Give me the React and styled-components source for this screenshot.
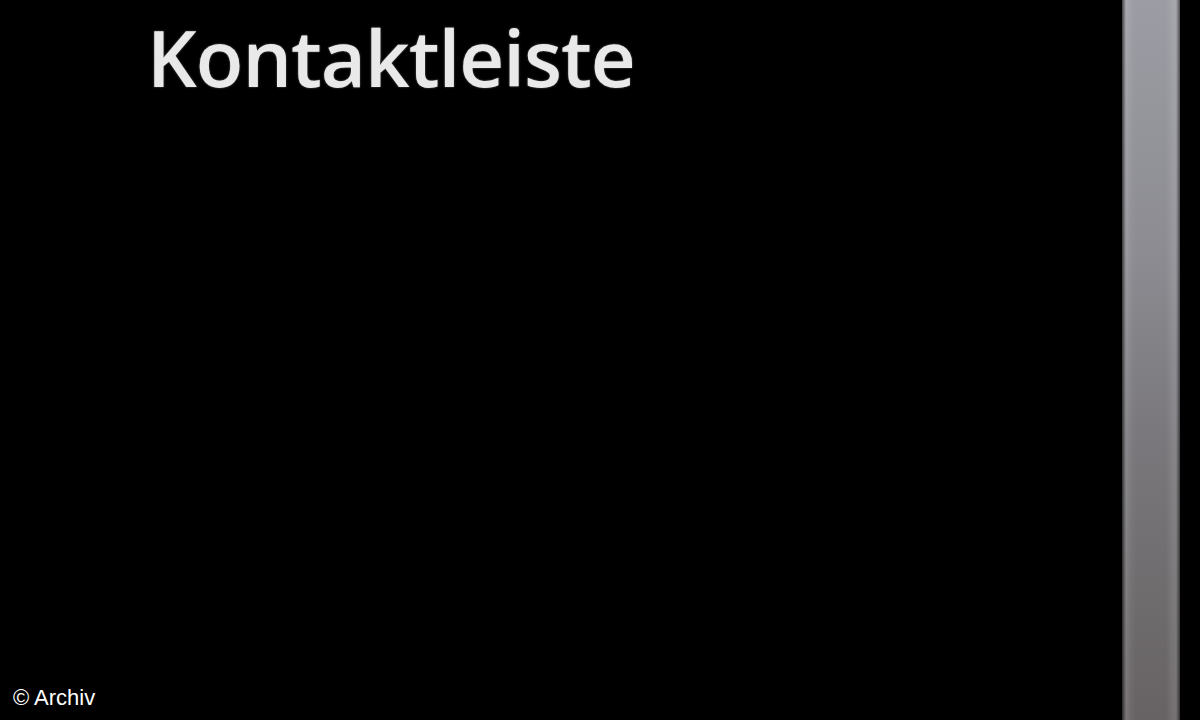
import React from 'react';
import styled, { createGlobalStyle } from 'styled-components';

const GlobalStyle = createGlobalStyle`
  html, body {
    margin: 0;
    padding: 0;
    background: #000;
  }
  #root {
    height: 720px;
  }
`;

const Screen = styled.div`
  display: flex;
  flex-direction: row;
  width: 1200px;
  height: 720px;
  background: #000;
  overflow: hidden;
`;

const Main = styled.div`
  flex: 1;
  display: flex;
  flex-direction: column;
  justify-content: space-between;
`;

const Title = styled.h1`
  margin: 0;
  padding: 7px 0 0 147px;
  font-family: "Open Sans", "Noto Sans", sans-serif;
  font-weight: 600;
  font-size: 78px;
  line-height: 100px;
  color: #e9e9e9;
  text-shadow: 0 0 2px rgba(255, 255, 255, 0.45);
  letter-spacing: -1px;
`;

const Credit = styled.div`
  padding: 0 0 9px 13px;
  font-family: "Liberation Sans", Arial, sans-serif;
  font-size: 22px;
  color: #fff;
`;

const ScrollTrack = styled.div`
  flex: 0 0 100px;
  padding-left: 22px;
  padding-right: 20px;
  box-sizing: border-box;
  display: flex;
`;

const ScrollBar = styled.div`
  flex: 1;
  background:
    linear-gradient(to right,
      rgba(0, 0, 0, 0.6) 0px,
      rgba(255, 255, 255, 0.12) 4px,
      rgba(255, 255, 255, 0.04) 9px,
      rgba(0, 0, 0, 0) 14px,
      rgba(0, 0, 0, 0) 44px,
      rgba(255, 255, 255, 0.08) 50px,
      rgba(255, 255, 255, 0.1) 54px,
      rgba(0, 0, 0, 0.5) 58px),
    linear-gradient(to bottom, #9c9ca4 0%, #8c8c92 35%, #7a787c 60%, #676364 100%);
`;

export default function App() {
  return (
    <Screen>
      <GlobalStyle />
      <Main>
        <Title>Kontaktleiste</Title>
        <Credit>© Archiv</Credit>
      </Main>
      <ScrollTrack>
        <ScrollBar />
      </ScrollTrack>
    </Screen>
  );
}
